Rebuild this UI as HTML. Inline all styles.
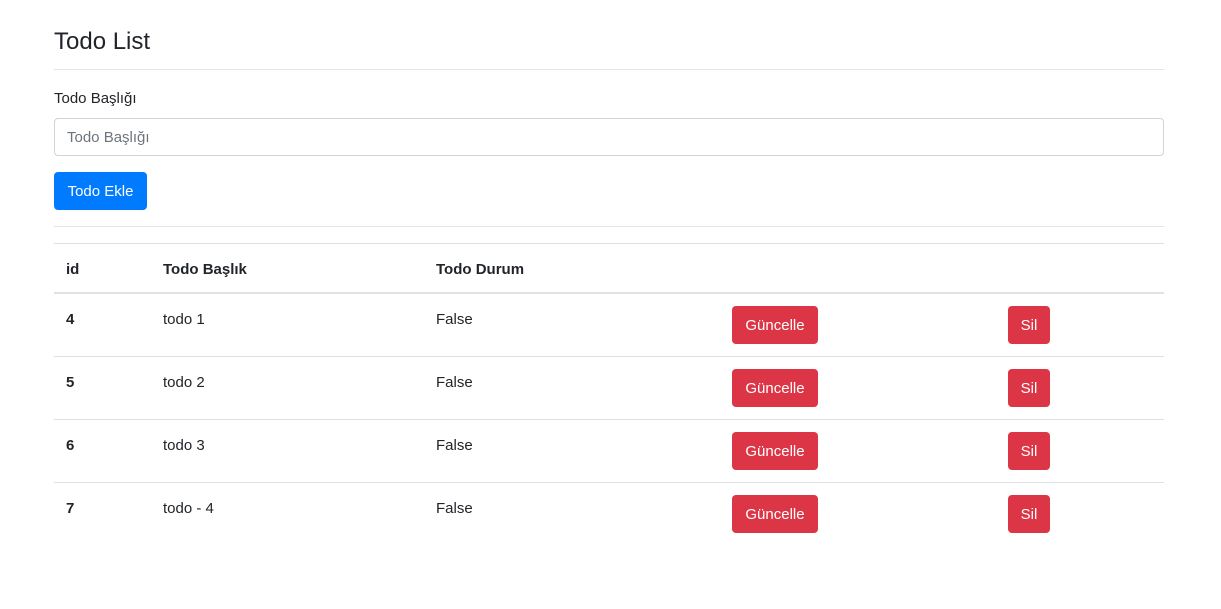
<!DOCTYPE html>
<html><head><meta charset="utf-8"><style>
*{box-sizing:border-box;margin:0;padding:0}
body{width:1221px;height:609px;background:#fff;font-family:"Liberation Sans",Arial,sans-serif;color:#212529;font-size:16px;position:relative;overflow:hidden}
h3{position:absolute;left:54px;top:28px;font-size:24px;font-weight:500;line-height:28px}
.hr{position:absolute;left:54px;width:1110px;height:1px;background:#e5e5e5}
.lbl{position:absolute;left:54px;top:90px;font-size:15px}
.inp{position:absolute;left:54px;top:118px;width:1110px;height:38px;border:1px solid #ced4da;border-radius:4px;padding:1px 12px 0;line-height:36px;color:#6c757d;font-size:15px}
.btn{position:absolute;height:38px;line-height:40px;color:#fff;border-radius:4px;font-size:15px;text-align:center}
.blue{background:#007bff}
.red{background:#dc3545}
.t{position:absolute;font-size:15px}
.b{font-weight:bold}
</style></head><body>
<h3>Todo List</h3>
<div class="hr" style="top:69px"></div>
<div class="lbl">Todo Başlığı</div>
<div class="inp">Todo Başlığı</div>
<div class="btn blue" style="left:54px;top:172px;width:93px">Todo Ekle</div>
<div class="hr" style="top:226px"></div>
<div class="hr" style="top:243px;background:#dee2e6"></div>
<div class="t b" style="left:66px;top:261px">id</div>
<div class="t b" style="left:163px;top:261px">Todo Başlık</div>
<div class="t b" style="left:436px;top:261px">Todo Durum</div>
<div class="hr" style="top:292px;height:2px;background:#dee2e6"></div>

<div class="t b" style="left:66px;top:311px">4</div>
<div class="t" style="left:163px;top:311px">todo 1</div>
<div class="t" style="left:436px;top:311px">False</div>
<div class="btn red" style="left:732px;top:306px;width:86px">Güncelle</div>
<div class="btn red" style="left:1008px;top:306px;width:42px">Sil</div>
<div class="hr" style="top:356px;background:#dee2e6"></div>

<div class="t b" style="left:66px;top:374px">5</div>
<div class="t" style="left:163px;top:374px">todo 2</div>
<div class="t" style="left:436px;top:374px">False</div>
<div class="btn red" style="left:732px;top:369px;width:86px">Güncelle</div>
<div class="btn red" style="left:1008px;top:369px;width:42px">Sil</div>
<div class="hr" style="top:419px;background:#dee2e6"></div>

<div class="t b" style="left:66px;top:437px">6</div>
<div class="t" style="left:163px;top:437px">todo 3</div>
<div class="t" style="left:436px;top:437px">False</div>
<div class="btn red" style="left:732px;top:432px;width:86px">Güncelle</div>
<div class="btn red" style="left:1008px;top:432px;width:42px">Sil</div>
<div class="hr" style="top:482px;background:#dee2e6"></div>

<div class="t b" style="left:66px;top:500px">7</div>
<div class="t" style="left:163px;top:500px">todo - 4</div>
<div class="t" style="left:436px;top:500px">False</div>
<div class="btn red" style="left:732px;top:495px;width:86px">Güncelle</div>
<div class="btn red" style="left:1008px;top:495px;width:42px">Sil</div>
</body></html>
